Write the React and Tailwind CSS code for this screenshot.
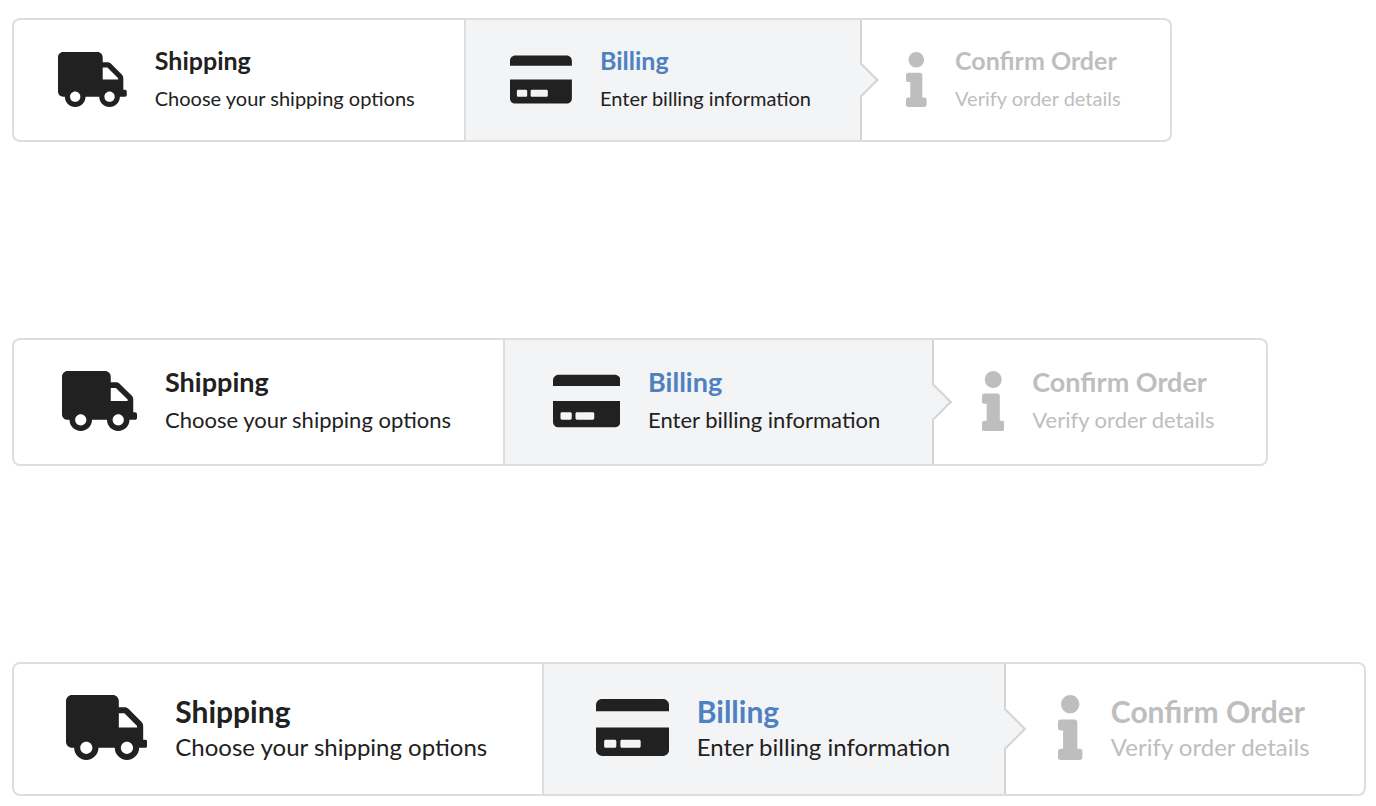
import { FaCreditCard, FaInfo, FaTruck } from "react-icons/fa";

const STEPS = [
  { icon: FaTruck, shape: "aspect-[5/4]", title: "Shipping", description: "Choose your shipping options" },
  { icon: FaCreditCard, shape: "aspect-[9/8]", title: "Billing", description: "Enter billing information", state: "active" },
  { icon: FaInfo, shape: "aspect-[3/8]", title: "Confirm Order", description: "Verify order details", state: "disabled" },
];

const SIZES = {
  mini: {
    group: "max-w-[1160px] min-h-[124px]",
    step: "px-11 pb-0.5",
    icon: "h-[55px]",
    text: "pt-0.5",
    title: "text-[25px] leading-[32px]",
    description: "mt-1 text-[20px] leading-[36px]",
    arrow: "size-[25px]",
  },
  tiny: {
    group: "max-w-[1256px] min-h-[128px]",
    step: "px-12 pb-0.5",
    icon: "h-[60px]",
    text: "pt-0.5",
    title: "text-[27px] leading-[32px]",
    description: "mt-1 text-[22px] leading-[36px]",
    arrow: "size-[27px]",
  },
  small: {
    group: "max-w-[1354px] min-h-[134px]",
    step: "px-[52px] pb-1",
    icon: "h-[65px]",
    text: "pt-1",
    title: "text-[30px] leading-[36px]",
    description: "text-[24px] leading-[36px]",
    arrow: "size-[30px]",
  },
};

const STATES = {
  default: { step: "border-[#dededf] text-[#212121]", title: "" },
  active: { step: "border-[#d4d4d5] bg-[#f3f4f6] text-[#212121]", title: "text-[#4f81c1]" },
  disabled: { step: "text-[#bebebe]", title: "" },
};

function Step({ step, size }) {
  const Icon = step.icon;
  const state = STATES[step.state ?? "default"];
  return (
    <li
      aria-current={step.state === "active" ? "step" : undefined}
      className={`relative flex flex-auto items-center gap-7 border-r-2 first:rounded-l-md last:rounded-r-md last:border-r-0 ${size.step} ${state.step}`}
    >
      {step.state === "active" && (
        <span
          aria-hidden="true"
          className={`absolute top-1/2 -right-px translate-x-1/2 -translate-y-1/2 -rotate-45 border-r-2 border-b-2 border-[#d4d4d5] bg-[#f3f4f6] ${size.arrow}`}
        />
      )}
      <Icon aria-hidden="true" className={`w-auto shrink-0 ${step.shape} ${size.icon}`} />
      <div className={`whitespace-nowrap ${size.text}`}>
        <div className={`font-bold ${size.title} ${state.title}`}>{step.title}</div>
        <div className={size.description}>{step.description}</div>
      </div>
    </li>
  );
}

function Steps({ size }) {
  return (
    <ol className={`flex w-full rounded-lg border-2 border-[#dededf] bg-white ${size.group}`}>
      {STEPS.map((step) => (
        <Step key={step.title} step={step} size={size} />
      ))}
    </ol>
  );
}

export default function App() {
  return (
    <main className="flex flex-col gap-[196px] bg-white pt-[18px] pr-2.5 pb-2.5 pl-3 font-['Lato',sans-serif]">
      <Steps size={SIZES.mini} />
      <Steps size={SIZES.tiny} />
      <Steps size={SIZES.small} />
    </main>
  );
}
